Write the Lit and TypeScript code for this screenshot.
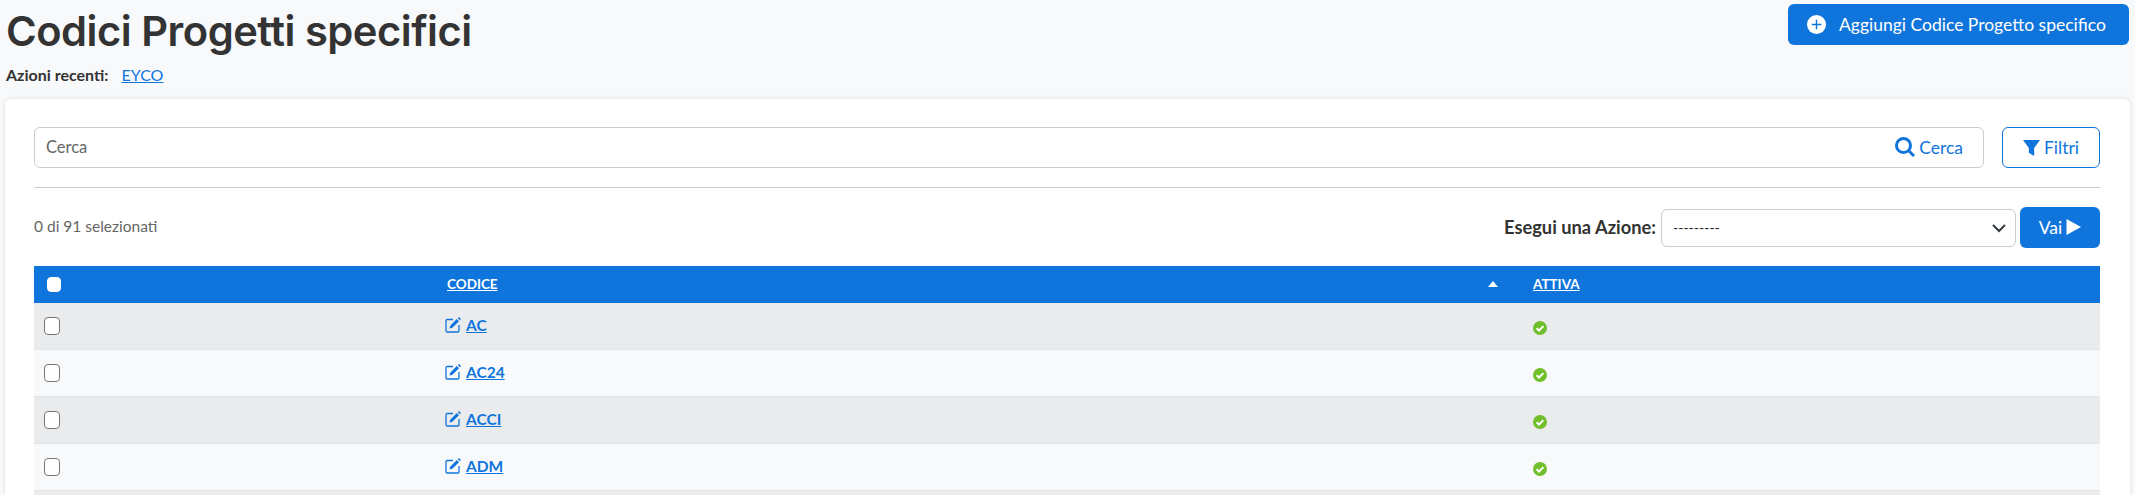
import { LitElement, html, css } from 'lit';
import { customElement } from 'lit/decorators.js';

const rows = ['AC', 'AC24', 'ACCI', 'ADM'];

const editIcon = html`<svg class="edit" viewBox="0 0 16 16">
  <path d="M8 2.500H2.200C1.500 2.500 1 3 1 3.700v10.100c0 .7.5 1.200 1.200 1.200h10.600c.7 0 1.200-.5 1.200-1.200V8" fill="none" stroke="currentColor" stroke-width="1.300"/>
  <path d="M4.500 11.500l.7-2.800L11.800 2l2.200 2.200-6.700 6.600zM12.700 1.100l.7-.7c.3-.3.7-.3 1 0l1.200 1.200c.3.3.3.7 0 1l-.7.7z" fill="currentColor"/>
</svg>`;

const checkIcon = html`<svg class="ok" viewBox="0 0 14 14"><circle cx="7" cy="7" r="7" fill="#70bf2b"/><path d="M3.600 7.200l2.400 2.300 4.400-4.400" fill="none" stroke="#fff" stroke-width="2"/></svg>`;

@customElement('app-root')
export class AppRoot extends LitElement {
  static styles = css`
    :host {
      display: block;
      height: 495px;
      overflow: hidden;
      background: #f8f9fb;
      color: #333;
      font-family: Lato, sans-serif;
      font-size: 16px;
    }
    a {
      color: #0f75dc;
    }
    .top {
      display: flex;
      justify-content: space-between;
      align-items: flex-start;
      height: 99px;
      padding: 4px 6px 0 6px;
      box-sizing: border-box;
    }
    h1 {
      margin: 0;
      font-family: Inter, sans-serif;
      font-size: 41.700px;
      line-height: 54px;
      font-weight: 600;
      letter-spacing: -0.5px;
      color: #333;
    }
    .recent {
      margin-top: 7px;
      font-size: 16px;
      line-height: 20px;
    }
    .recent b {
      font-weight: 700;
      margin-right: 9px;
    }
    .add {
      display: flex;
      align-items: center;
      gap: 13px;
      height: 41px;
      width: 341px;
      box-sizing: border-box;
      padding-left: 19px;
      background: #0f75dc;
      color: #fff;
      border-radius: 6px;
      font-size: 17.500px;
    }
    .add svg {
      width: 19px;
      height: 19px;
    }
    .card {
      margin: 0 5px;
      padding: 28px 30px 0 29px;
      background: #fff;
      border-radius: 6px 6px 0 0;
      box-shadow: 0 0 4px rgba(0, 0, 0, 0.12);
      height: 396px;
      box-sizing: border-box;
    }
    .search-row {
      display: flex;
      gap: 18px;
      padding-bottom: 19px;
      border-bottom: 1px solid #ccc;
    }
    .search {
      flex: 1;
      height: 41px;
      box-sizing: border-box;
      display: flex;
      align-items: center;
      justify-content: space-between;
      padding: 0 20px 1px 11px;
      border: 1px solid #ccc;
      border-radius: 6px;
      color: #666;
      font-size: 16.500px;
    }
    .search span.go,
    .filter {
      color: #0f75dc;
      display: flex;
      align-items: center;
      gap: 4px;
      font-size: 17.500px;
    }
    .search svg {
      width: 20px;
      height: 20px;
    }
    .filter {
      width: 98px;
      height: 41px;
      box-sizing: border-box;
      justify-content: center;
      padding-bottom: 1px;
      border: 1px solid #0f75dc;
      border-radius: 6px;
    }
    .filter svg {
      width: 17px;
      height: 17px;
    }
    .actions {
      display: flex;
      align-items: center;
      justify-content: space-between;
      height: 41px;
      margin-top: 19px;
      margin-bottom: 18px;
    }
    .count {
      color: #666;
      font-size: 15.500px;
      padding-bottom: 3px;
    }
    .run {
      display: flex;
      align-items: center;
    }
    .run label {
      font-weight: 700;
      font-size: 18.300px;
      margin-right: 5px;
      padding-bottom: 1px;
    }
    .select {
      width: 355px;
      height: 38px;
      box-sizing: border-box;
      display: flex;
      align-items: center;
      justify-content: space-between;
      padding: 0 8px 0 11px;
      border: 1px solid #ccc;
      border-radius: 6px;
      color: #222;
      font-size: 14px;
    }
    .select svg {
      width: 16px;
      height: 16px;
    }
    .vai {
      margin-left: 4px;
      width: 80px;
      height: 41px;
      display: flex;
      align-items: center;
      justify-content: center;
      gap: 4px;
      padding-bottom: 1px;
      box-sizing: border-box;
      background: #0f75dc;
      color: #fff;
      border-radius: 6px;
      font-size: 17.500px;
    }
    .vai svg {
      width: 15px;
      height: 18px;
    }
    .row {
      display: grid;
      grid-template-columns: 411px 1088px 1fr;
      align-items: center;
      height: 47px;
      box-sizing: border-box;
      border-bottom: 1px solid #e3e4e6;
      background: #f8f9fb;
    }
    .row:nth-child(even) {
      background: #eaebed;
    }
    .head {
      height: 37px;
      padding-bottom: 2px;
      background: #0f75dc;
      border: 0;
      font-weight: 700;
      font-size: 13.500px;
      color: #fff;
    }
    .head a {
      color: #fff;
    }
    .head .col {
      display: flex;
      justify-content: space-between;
      align-items: center;
      padding-right: 35px;
      padding-left: 2px;
    }
    .sort {
      width: 0;
      height: 0;
      border: 5px solid transparent;
      border-top: 0;
      border-bottom: 6px solid #fff;
    }
    .box {
      display: block;
      width: 16px;
      height: 18px;
      box-sizing: border-box;
      margin-left: 10px;
      border: 1px solid #777;
      border-radius: 4px;
      background: #fff;
    }
    .head .box {
      width: 14px;
      height: 15px;
      margin-left: 13px;
      margin-top: 2px;
      border-color: #fff;
    }
    .code {
      display: flex;
      align-items: center;
      gap: 5px;
      padding-bottom: 2px;
      font-weight: 700;
      font-size: 15.500px;
      color: #0f75dc;
    }
    .edit {
      width: 16px;
      height: 16px;
    }
    .ok {
      display: block;
      width: 14px;
      height: 14px;
      margin-top: 3px;
    }
  `;

  render() {
    return html`
      <div class="top">
        <div>
          <h1>Codici Progetti specifici</h1>
          <div class="recent"><b>Azioni recenti:</b> <a href="#">EYCO</a></div>
        </div>
        <div class="add">
          <svg viewBox="0 0 20 20">
            <circle cx="10" cy="10" r="10" fill="#fff" />
            <path d="M10 5v10M5 10h10" stroke="#0f75dc" stroke-width="1.500" />
          </svg>
          Aggiungi Codice Progetto specifico
        </div>
      </div>
      <div class="card">
        <div class="search-row">
          <div class="search">
            <span>Cerca</span>
            <span class="go">
              <svg viewBox="0 0 20 20" fill="none" stroke="currentColor" stroke-width="3">
                <circle cx="8.500" cy="8.500" r="7" />
                <path d="M13.500 13.500L19 19" />
              </svg>
              Cerca
            </span>
          </div>
          <div class="filter">
            <svg viewBox="0 0 16 16" fill="currentColor"><path d="M0 1h16L10.500 8.500V16L5.500 13V8.500z" /></svg>
            Filtri
          </div>
        </div>
        <div class="actions">
          <span class="count">0 di 91 selezionati</span>
          <div class="run">
            <label>Esegui una Azione:</label>
            <div class="select">
              <span>---------</span>
              <svg viewBox="0 0 16 16" fill="none" stroke="#343a40" stroke-width="2">
                <path d="M2 5l6 6 6-6" />
              </svg>
            </div>
            <div class="vai">
              Vai
              <svg viewBox="0 0 15 18" fill="#fff"><path d="M0.500 1L15 9 0.500 17z" /></svg>
            </div>
          </div>
        </div>
        <div class="table">
          <div class="row head">
            <span><span class="box"></span></span>
            <div class="col"><a href="#">CODICE</a><span class="sort"></span></div>
            <span><a href="#">ATTIVA</a></span>
          </div>
          ${rows.map(
            (r) => html`
              <div class="row">
                <span><span class="box"></span></span>
                <div class="code">${editIcon}<a href="#">${r}</a></div>
                ${checkIcon}
              </div>
            `
          )}
          <div class="row"></div>
        </div>
      </div>
    `;
  }
}
